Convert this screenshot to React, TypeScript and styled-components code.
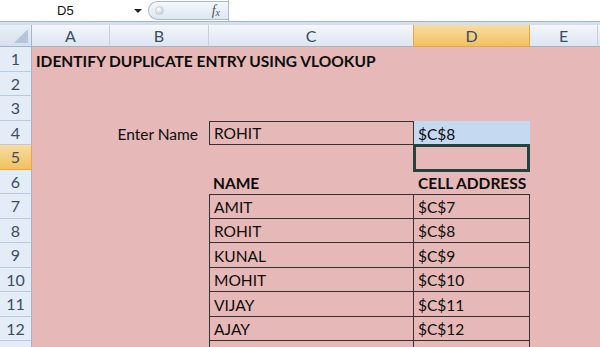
import React from 'react';
import styled, { createGlobalStyle, css } from 'styled-components';

const GlobalStyle = createGlobalStyle`
    html, body {
        margin: 0;
        padding: 0;
        background: #fff;
    }
    body {
        font-family: 'Lato', 'Open Sans', sans-serif;
    }
`;

const columns = ['A', 'B', 'C', 'D', 'E'];
const colWidths = '32px 78px 99px 205px 116px 68px 1fr';
const selectedCol = 'D';
const selectedRow = 5;

const names = [
    { name: 'AMIT', addr: '$C$7' },
    { name: 'ROHIT', addr: '$C$8' },
    { name: 'KUNAL', addr: '$C$9' },
    { name: 'MOHIT', addr: '$C$10' },
    { name: 'VIJAY', addr: '$C$11' },
    { name: 'AJAY', addr: '$C$12' },
    { name: '', addr: '' }
];

export default function App() {
    const rows = Array.from({ length: 13 }, (_, i) => i + 1);

    const renderRow = (r: number) => {
        const cells: React.ReactNode[] = [];
        cells.push(
            <RowHead key={`h${r}`} $active={r === selectedRow}>
                {r}
            </RowHead>
        );

        if (r === 1) {
            cells.push(
                <Cell key={`a${r}`} $bold $span={5}>
                    IDENTIFY DUPLICATE ENTRY USING VLOOKUP
                </Cell>
            );
            cells.push(<Cell key={`x${r}`} />);
            return cells;
        }

        if (r === 4) {
            cells.push(<Cell key={`a${r}`} />);
            cells.push(
                <Cell key={`b${r}`} $right>
                    Enter Name
                </Cell>
            );
            cells.push(
                <Cell key={`c${r}`} $top $left $rightEdge $bottom>
                    ROHIT
                </Cell>
            );
            cells.push(
                <Cell key={`d${r}`} $fill="#c5d9f1">
                    $C$8
                </Cell>
            );
            cells.push(<Cell key={`e${r}`} />);
            cells.push(<Cell key={`x${r}`} />);
            return cells;
        }

        if (r === 5) {
            cells.push(<Cell key={`a${r}`} />, <Cell key={`b${r}`} />, <Cell key={`c${r}`} />);
            cells.push(<Cell key={`d${r}`} $selected />);
            cells.push(<Cell key={`e${r}`} />, <Cell key={`x${r}`} />);
            return cells;
        }

        if (r === 6) {
            cells.push(<Cell key={`a${r}`} />, <Cell key={`b${r}`} />);
            cells.push(
                <Cell key={`c${r}`} $bold>
                    NAME
                </Cell>
            );
            cells.push(
                <Cell key={`d${r}`} $bold>
                    CELL ADDRESS
                </Cell>
            );
            cells.push(<Cell key={`e${r}`} />, <Cell key={`x${r}`} />);
            return cells;
        }

        if (r >= 7) {
            const item = names[r - 7];
            cells.push(<Cell key={`a${r}`} />, <Cell key={`b${r}`} />);
            cells.push(
                <Cell key={`c${r}`} $top={r === 7} $left $rightEdge $bottom>
                    {item?.name}
                </Cell>
            );
            cells.push(
                <Cell key={`d${r}`} $top={r === 7} $rightEdge $bottom>
                    {item?.addr}
                </Cell>
            );
            cells.push(<Cell key={`e${r}`} />, <Cell key={`x${r}`} />);
            return cells;
        }

        cells.push(
            <Cell key={`a${r}`} />,
            <Cell key={`b${r}`} />,
            <Cell key={`c${r}`} />,
            <Cell key={`d${r}`} />,
            <Cell key={`e${r}`} />,
            <Cell key={`x${r}`} />
        );
        return cells;
    };

    return (
        <Wrapper>
            <GlobalStyle />
            <FormulaBar>
                <NameBox>
                    <span className="ref">D5</span>
                    <DropArrow />
                </NameBox>
                <FxPill>
                    <Knob />
                    <FxLabel>
                        f<sub>x</sub>
                    </FxLabel>
                </FxPill>
                <FormulaInput />
            </FormulaBar>
            <Band />
            <Sheet>
                <Corner>
                    <svg width="14" height="14" viewBox="0 0 14 14">
                        <polygon points="14,0 14,14 0,14" fill="#b5c5d9" />
                    </svg>
                </Corner>
                {columns.map(c => (
                    <ColHead key={c} $active={c === selectedCol}>
                        {c}
                    </ColHead>
                ))}
                <ColHead />
                {rows.map(r => renderRow(r))}
            </Sheet>
        </Wrapper>
    );
}

const Wrapper = styled.div`
    width: 600px;
    height: 347px;
    overflow: hidden;
    background: #fff;
`;

const FormulaBar = styled.div`
    display: flex;
    align-items: stretch;
    height: 22px;
    background: #fff;
    border-bottom: 1px solid #a5b6ca;
    box-sizing: border-box;
`;

const NameBox = styled.div`
    width: 146px;
    display: flex;
    align-items: center;
    position: relative;
    font-family: 'Liberation Sans', Arial, sans-serif;
    font-size: 13px;
    color: #111;
    .ref {
        margin-left: 57px;
    }
`;

const DropArrow = styled.span`
    position: absolute;
    right: 4px;
    top: 9px;
    width: 0;
    height: 0;
    border-left: 4px solid transparent;
    border-right: 4px solid transparent;
    border-top: 4px solid #222;
`;

const FxPill = styled.div`
    width: 80px;
    margin: 1px 0 1px 2px;
    border: 1px solid #a9b9cc;
    border-right: none;
    border-radius: 10px 0 0 10px;
    background: linear-gradient(#f5f8fc, #dde6f1);
    display: flex;
    align-items: center;
    justify-content: space-between;
    padding: 0 8px 0 6px;
    box-sizing: border-box;
`;

const Knob = styled.span`
    width: 7px;
    height: 7px;
    border-radius: 50%;
    background: radial-gradient(circle at 35% 35%, #fff, #b7c1cc);
    border: 1px solid #c6cfd9;
`;

const FxLabel = styled.span`
    font-family: 'Liberation Serif', 'Times New Roman', serif;
    font-style: italic;
    font-size: 14px;
    color: #555;
    sub {
        font-size: 10px;
        vertical-align: -1px;
    }
`;

const FormulaInput = styled.div`
    flex: 1;
    border-left: 1px solid #a9b9cc;
    background: #fff;
`;

const Band = styled.div`
    height: 3px;
    background: #d5dfec;
`;

const Sheet = styled.div`
    display: grid;
    grid-template-columns: ${colWidths};
    grid-template-rows: 22px repeat(13, 24.5px);
    background: #e6b8b7;
`;

const headBase = css`
    display: flex;
    align-items: center;
    justify-content: center;
    font-family: 'Lato', 'Open Sans', sans-serif;
    font-size: 16px;
    color: #3a4d63;
    box-sizing: border-box;
`;

const Corner = styled.div`
    ${headBase};
    justify-content: flex-end;
    align-items: flex-end;
    padding: 0 3px 3px 0;
    background: linear-gradient(#e9eff7, #d6e0ed);
    border-right: 1px solid #9eb6ce;
    border-bottom: 1px solid #9eb6ce;
`;

const ColHead = styled.div<{ $active?: boolean }>`
    ${headBase};
    background: ${p =>
        p.$active ? 'linear-gradient(#f9dca3, #f1c15e)' : 'linear-gradient(#f4f7fb, #dce5f1)'};
    border-right: 1px solid ${p => (p.$active ? '#f2a33a' : '#c3d0df')};
    border-bottom: 1px solid ${p => (p.$active ? '#f2a33a' : '#9eb6ce')};
    border-left: ${p => (p.$active ? '1px solid #f2a33a' : 'none')};
    margin-left: ${p => (p.$active ? '-1px' : '0')};
`;

const RowHead = styled.div<{ $active?: boolean }>`
    ${headBase};
    background: ${p => (p.$active ? 'linear-gradient(#f9dca3, #f1c15e)' : '#e4ecf7')};
    border-right: 1px solid ${p => (p.$active ? '#f2a33a' : '#9eb6ce')};
    border-bottom: 1px solid ${p => (p.$active ? '#f2a33a' : '#b9cade')};
`;

const Cell = styled.div<{
    $bold?: boolean;
    $span?: number;
    $right?: boolean;
    $top?: boolean;
    $left?: boolean;
    $rightEdge?: boolean;
    $bottom?: boolean;
    $fill?: string;
    $selected?: boolean;
}>`
    display: flex;
    align-items: flex-end;
    justify-content: ${p => (p.$right ? 'flex-end' : 'flex-start')};
    padding: 0 ${p => (p.$right ? '11px' : '3px')} 2px 4px;
    box-sizing: border-box;
    min-width: 0;
    white-space: nowrap;
    overflow: visible;
    font-family: 'Lato', 'Open Sans', sans-serif;
    font-size: 15.5px;
    line-height: 18px;
    font-weight: ${p => (p.$bold ? 700 : 400)};
    color: #0d0d0d;
    grid-column: ${p => (p.$span ? `span ${p.$span}` : 'auto')};
    background: ${p => p.$fill || 'transparent'};
    border-top: ${p => (p.$top ? '1px solid #333' : 'none')};
    border-left: ${p => (p.$left ? '1px solid #333' : 'none')};
    border-right: ${p => (p.$rightEdge ? '1px solid #333' : 'none')};
    border-bottom: ${p => (p.$bottom ? '1px solid #333' : 'none')};
    ${p =>
        p.$selected &&
        css`
            border: 3px solid #22443e;
            margin: -1px 0 -2px -1px;
        `}
`;
